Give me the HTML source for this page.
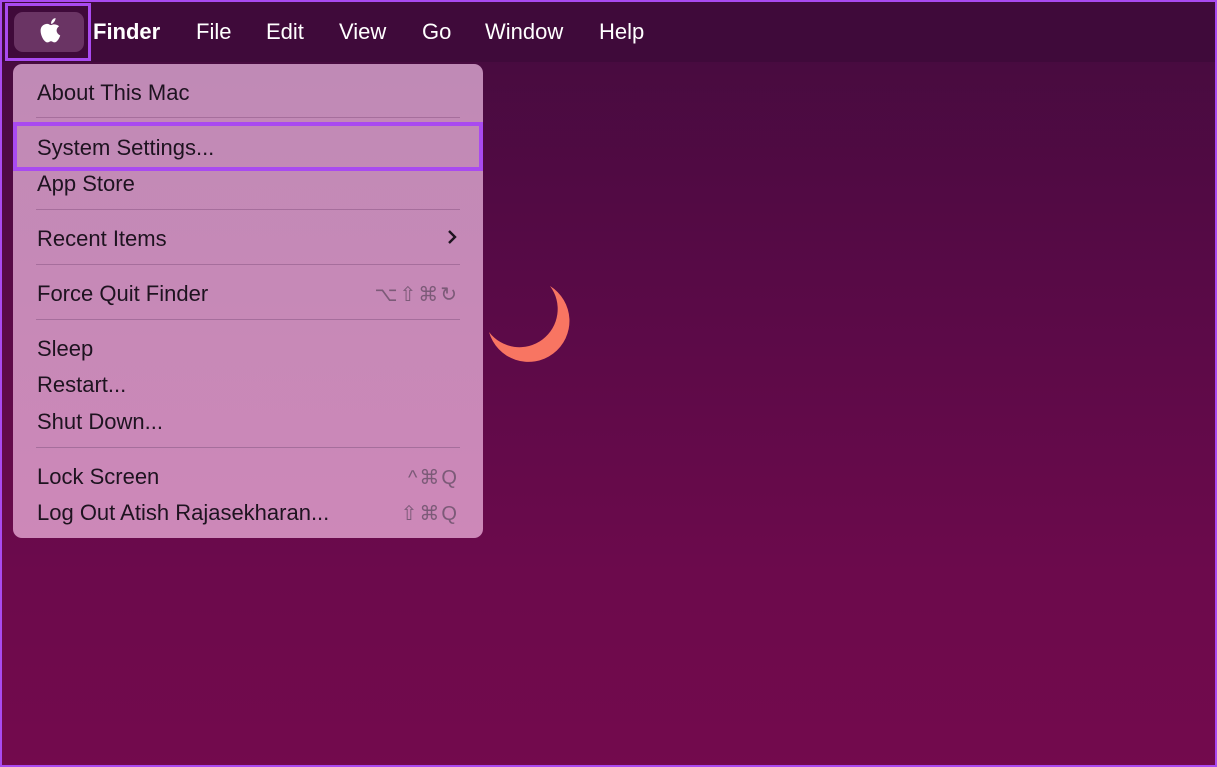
<!DOCTYPE html>
<html><head><style>
*{margin:0;padding:0;box-sizing:border-box}
body{width:1217px;height:767px;overflow:hidden;font-family:"Liberation Sans",sans-serif;position:relative;
background:linear-gradient(180deg,#440b3e 0%,#5a0a47 40%,#6c0a4c 75%,#730a4d 100%);}
.frame{position:absolute;inset:0;border:2px solid #a94af0;pointer-events:none;z-index:10}
.bar{position:absolute;left:0;top:0;width:1217px;height:62px;background:#3f0a3a}
.bar span{position:absolute;top:19px;color:#fff;font-size:22px}
.apple{position:absolute;left:5px;top:3px;width:86px;height:58px;border:3px solid #a94af0;background:#3f0a3a}
.apple div{position:absolute;left:6px;top:6px;width:70px;height:40px;border-radius:9px;background:#6a3464}
.menu{position:absolute;left:13px;top:64px;width:470px;height:474px;border-radius:9px;background:linear-gradient(180deg,#c08ab6,#cd88b8)}
.it{position:absolute;left:24px;font-size:22px;color:#1e1320}
.sep{position:absolute;left:23px;width:424px;height:1px;background:#a66e9c}
.sc{position:absolute;right:24px;font-size:20px;color:#7c5a78;letter-spacing:2px}
.hl{position:absolute;left:13px;top:122px;width:470px;height:49px;border:4px solid #a94af0}
</style></head><body>
<div class="bar">
<span style="left:93px;font-weight:bold">Finder</span>
<span style="left:196px">File</span>
<span style="left:266px">Edit</span>
<span style="left:339px">View</span>
<span style="left:422px">Go</span>
<span style="left:485px">Window</span>
<span style="left:599px">Help</span>
</div>
<div class="apple"><div></div>
<svg style="position:absolute;left:30px;top:11px" width="26" height="30" viewBox="0 0 22 26"><path fill="#fff" d="M11 7c2-1 5-1 7 1-3 2-3 6 1 8-1 3-3 6-5 6-1 0-2-1-3-1s-2 1-3 1c-3 0-6-6-6-10 0-5 4-6 6-6 1 0 2 1 3 1zM11 6c0-3 2-5 4-5 0 2-2 5-4 5z"/></svg>
</div>
<div class="menu">
<div class="it" style="top:16px">About This Mac</div>
<div class="sep" style="top:53px"></div>
<div class="it" style="top:71px">System Settings...</div>
<div class="it" style="top:107px">App Store</div>
<div class="sep" style="top:145px"></div>
<div class="it" style="top:162px">Recent Items</div>
<svg style="position:absolute;right:26px;top:165px" width="10" height="16" viewBox="0 0 10 16"><path d="M2 2l6 6-6 6" stroke="#1e1320" stroke-width="2.4" fill="none"/></svg>
<div class="sep" style="top:200px"></div>
<div class="it" style="top:217px">Force Quit Finder</div>
<div class="sc" style="top:218px">⌥⇧⌘↻</div>
<div class="sep" style="top:255px"></div>
<div class="it" style="top:272px">Sleep</div>
<div class="it" style="top:308px">Restart...</div>
<div class="it" style="top:345px">Shut Down...</div>
<div class="sep" style="top:383px"></div>
<div class="it" style="top:400px">Lock Screen</div>
<div class="sc" style="top:401px">^⌘Q</div>
<div class="it" style="top:436px">Log Out Atish Rajasekharan...</div>
<div class="sc" style="top:437px">⇧⌘Q</div>
</div>
<div class="hl"></div>
<svg style="position:absolute;left:480px;top:280px" width="100" height="90" viewBox="0 0 100 90"><path fill="#f87562" d="M70 6 A41 41 0 1 1 9 52 A34 34 0 0 0 70 6 Z"/></svg>
<div class="frame"></div>
</body></html>
